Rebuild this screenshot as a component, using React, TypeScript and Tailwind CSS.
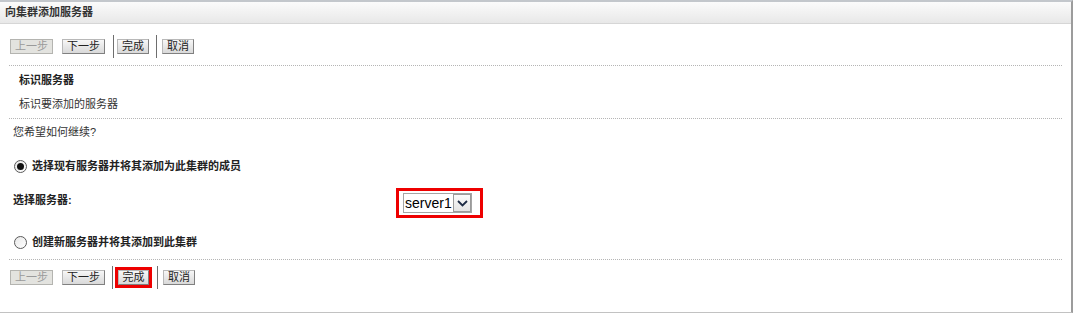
import React from 'react'

const font = { fontFamily: '"Liberation Sans", "Noto Sans CJK SC", sans-serif' }

function Btn({ label, disabled, width }: { label: string; disabled?: boolean; width: number }) {
  return (
    <button
      disabled={disabled}
      style={{ width }}
      className={`h-[15px] flex items-center justify-center text-[11px] leading-none border ${
        disabled
          ? 'bg-[#e3e3df] border-[#b4b4b0] text-[#9a9a9a]'
          : 'bg-gradient-to-b from-[#f7f7f7] to-[#d9d9d9] border-t-[#b8b8b8] border-l-[#b8b8b8] border-r-[#808080] border-b-[#808080] text-[#222]'
      }`}
    >
      {label}
    </button>
  )
}

function Sep() {
  return <div className="w-px h-[23px] bg-[#6e6e6e]"></div>
}

function ButtonRow({ highlight }: { highlight?: boolean }) {
  return (
    <div className="flex items-center h-[23px] pl-[10px]">
      <Btn label="上一步" disabled width={43} />
      <div className="ml-[9px]">
        <Btn label="下一步" width={43} />
      </div>
      <div className={highlight ? 'ml-[7px]' : 'ml-[8px]'}>
        <Sep />
      </div>
      {highlight ? (
        <div className="ml-[2px] border-[3px] border-[#ee0000]">
          <Btn label="完成" width={31} />
        </div>
      ) : (
        <div className="ml-[3px]">
          <Btn label="完成" width={32} />
        </div>
      )}
      <div className={highlight ? 'ml-[5px]' : 'ml-[7px]'}>
        <Sep />
      </div>
      <div className="ml-[5px]">
        <Btn label="取消" width={32} />
      </div>
    </div>
  )
}

function Radio({ checked }: { checked?: boolean }) {
  return (
    <div className="w-[13px] h-[13px] rounded-full border border-[#5a5a5a] bg-gradient-to-br from-[#e8e8e8] to-white flex items-center justify-center">
      {checked && <div className="w-[7px] h-[7px] rounded-full bg-[#111]"></div>}
    </div>
  )
}

function Dotted() {
  return <div className="ml-[9px] w-[1053px] border-t border-dotted border-[#b5b5b5]"></div>
}

export default function App() {
  return (
    <div className="w-[1073px] h-[314px] bg-white text-[#222]" style={font}>
      <div className="w-[1073px] h-[313px] border-t-2 border-t-[#c3c7cc] border-r-2 border-r-[#9c9c9c] border-b border-b-[#c2c2c2]">
        {/* Header */}
        <div className="h-[22px] bg-gradient-to-b from-[#fbfbfb] to-[#e8e8e8] border-b border-[#d6d6d6] flex items-center px-[5px]">
          <span className="text-[11px] font-bold text-[#333]">向集群添加服务器</span>
        </div>

        <div className="mt-[11px]">
          <ButtonRow />
        </div>

        <div className="mt-[7px]">
          <Dotted />
        </div>

        <div className="h-[28px] flex items-center pl-[19px] text-[11px] font-bold">标识服务器</div>
        <div className="h-[20px] flex items-center pl-[19px] text-[11px] text-[#333]">标识要添加的服务器</div>

        <div className="mt-[4px]">
          <Dotted />
        </div>

        <div className="h-[26px] flex items-center pl-[13px] text-[11px] text-[#333]">您希望如何继续?</div>

        <div className="mt-[10px] h-[22px] flex items-center pl-[14px]">
          <Radio checked />
          <span className="ml-[5px] text-[11px] font-bold">选择现有服务器并将其添加为此集群的成员</span>
        </div>

        <div className="mt-[11px] h-[30px] flex items-center pl-[13px]">
          <span className="w-[383px] text-[11px] font-bold pb-[6px]">选择服务器:</span>
          <div className="w-[87px] h-[30px] border-[3px] border-[#ee0000] flex items-center pl-[4px]">
            <div className="w-[69px] h-[20px] border border-[#a5a5a5] bg-white flex items-center">
              <span className="flex-1 pl-[1px] text-[14px] leading-none text-black" style={{ fontFamily: '"Liberation Sans", Arial, sans-serif' }}>
                server1
              </span>
              <div className="w-[18px] h-[18px] border border-[#9a9a9a] bg-gradient-to-b from-[#fafafa] to-[#e4e4e4] flex items-center justify-center">
                <svg width="11" height="7" viewBox="0 0 11 7">
                  <path d="M1 1 L5.5 5.5 L10 1" fill="none" stroke="#1c2a44" strokeWidth="1.8" />
                </svg>
              </div>
            </div>
          </div>
        </div>

        <div className="mt-[13px] h-[22px] flex items-center pl-[14px]">
          <Radio />
          <span className="ml-[5px] text-[11px] font-bold">创建新服务器并将其添加到此集群</span>
        </div>

        <div className="mt-[6px]">
          <Dotted />
        </div>

        <div className="mt-[6px]">
          <ButtonRow highlight />
        </div>
      </div>
    </div>
  )
}
